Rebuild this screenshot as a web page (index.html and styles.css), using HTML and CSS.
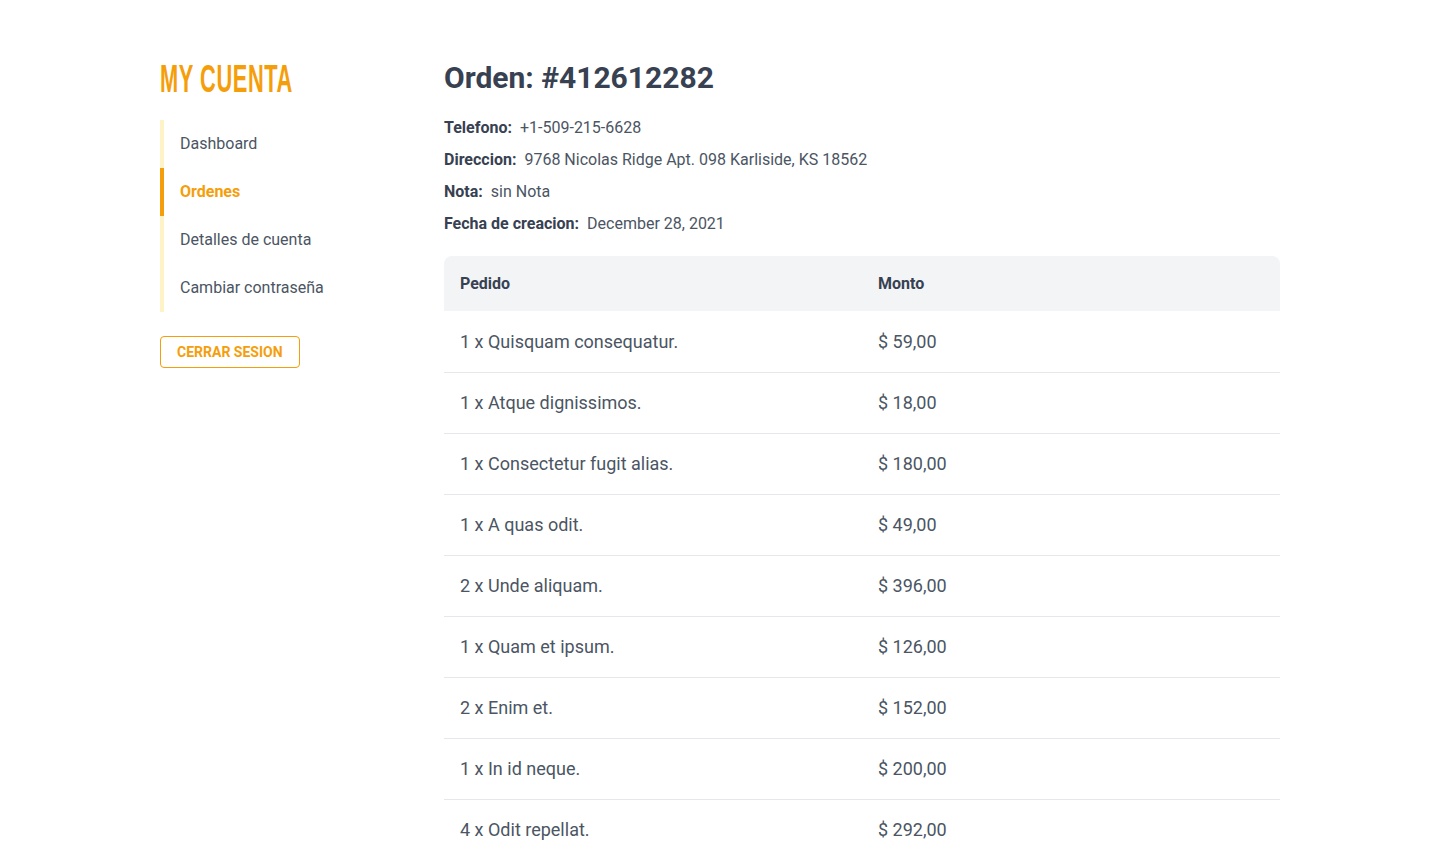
FILE: index.html
```html
<!DOCTYPE html>
<html lang="es">
<head>
<meta charset="utf-8">
<title>Orden</title>
<link rel="stylesheet" href="styles.css">
</head>
<body>
<div class="page">
  <aside class="sidebar">
    <h2 class="brand"><span class="brand-text">MY CUENTA</span></h2>
    <nav class="nav">
      <a class="nav-item" href="#">Dashboard</a>
      <a class="nav-item active" href="#">Ordenes</a>
      <a class="nav-item" href="#">Detalles de cuenta</a>
      <a class="nav-item" href="#">Cambiar contraseña</a>
    </nav>
    <button class="logout">CERRAR SESION</button>
  </aside>
  <main class="content">
    <h1 class="title">Orden: #412612282</h1>
    <div class="info">
      <p class="info-row"><span class="label">Telefono:</span>+1-509-215-6628</p>
      <p class="info-row"><span class="label">Direccion:</span>9768 Nicolas Ridge Apt. 098 Karliside, KS 18562</p>
      <p class="info-row"><span class="label">Nota:</span>sin Nota</p>
      <p class="info-row"><span class="label">Fecha de creacion:</span>December 28, 2021</p>
    </div>
    <table class="orders">
      <thead>
        <tr><th>Pedido</th><th>Monto</th></tr>
      </thead>
      <tbody>
        <tr><td>1 x Quisquam consequatur.</td><td>$ 59,00</td></tr>
        <tr><td>1 x Atque dignissimos.</td><td>$ 18,00</td></tr>
        <tr><td>1 x Consectetur fugit alias.</td><td>$ 180,00</td></tr>
        <tr><td>1 x A quas odit.</td><td>$ 49,00</td></tr>
        <tr><td>2 x Unde aliquam.</td><td>$ 396,00</td></tr>
        <tr><td>1 x Quam et ipsum.</td><td>$ 126,00</td></tr>
        <tr><td>2 x Enim et.</td><td>$ 152,00</td></tr>
        <tr><td>1 x In id neque.</td><td>$ 200,00</td></tr>
        <tr><td>4 x Odit repellat.</td><td>$ 292,00</td></tr>
      </tbody>
    </table>
  </main>
</div>
</body>
</html>
```
FILE: styles.css
```css
* { box-sizing: border-box; }
html, body { margin: 0; padding: 0; background: #fff; }
body {
  font-family: Roboto, "Liberation Sans", sans-serif;
  color: #4b5563;
}
.page {
  width: 1120px;
  margin: 0 auto;
  padding-top: 58px;
  display: flex;
}
.sidebar {
  width: 284px;
  flex-shrink: 0;
}
.brand {
  margin: 0 0 24px;
  height: 38px;
  line-height: 41px;
  color: #f59e0b;
  font-family: "Liberation Sans Narrow", "Liberation Sans", sans-serif;
  font-weight: 700;
  font-size: 39px;
}
.brand-text {
  display: inline-block;
  transform: scaleX(0.56);
  transform-origin: left center;
  letter-spacing: 1px;
}
.nav {
  display: flex;
  flex-direction: column;
}
.nav-item {
  display: block;
  height: 48px;
  line-height: 48px;
  padding-left: 16px;
  border-left: 4px solid #fef3c7;
  color: #4b5563;
  font-size: 16px;
  text-decoration: none;
}
.nav-item.active {
  border-left-color: #f59e0b;
  color: #f59e0b;
  font-weight: 700;
}
.logout {
  margin-top: 24px;
  height: 32px;
  padding: 0 16px;
  background: #fff;
  border: 1px solid #f59e0b;
  border-radius: 4px;
  color: #f59e0b;
  font-family: Roboto, "Liberation Sans", sans-serif;
  font-weight: 700;
  font-size: 14px;
}
.content {
  flex: 1;
}
.title {
  margin: 0;
  font-size: 30px;
  line-height: 40px;
  font-weight: 700;
  color: #374151;
}
.info {
  margin-top: 14px;
}
.info-row {
  margin: 0;
  line-height: 32px;
  font-size: 16px;
  color: #4b5563;
}
.label {
  font-weight: 700;
  color: #374151;
  margin-right: 8px;
}
.orders {
  margin-top: 16px;
  width: 100%;
  border-collapse: collapse;
  table-layout: fixed;
}
.orders th {
  background: #f3f4f6;
  text-align: left;
  font-weight: 700;
  font-size: 16px;
  color: #374151;
  height: 55px;
  padding: 0 16px;
}
.orders th:first-child { border-top-left-radius: 8px; }
.orders th:last-child { border-top-right-radius: 8px; }
.orders td {
  height: 61px;
  padding: 0 16px;
  font-size: 18px;
  color: #4b5563;
  border-bottom: 1px solid #e5e7eb;
}
```
